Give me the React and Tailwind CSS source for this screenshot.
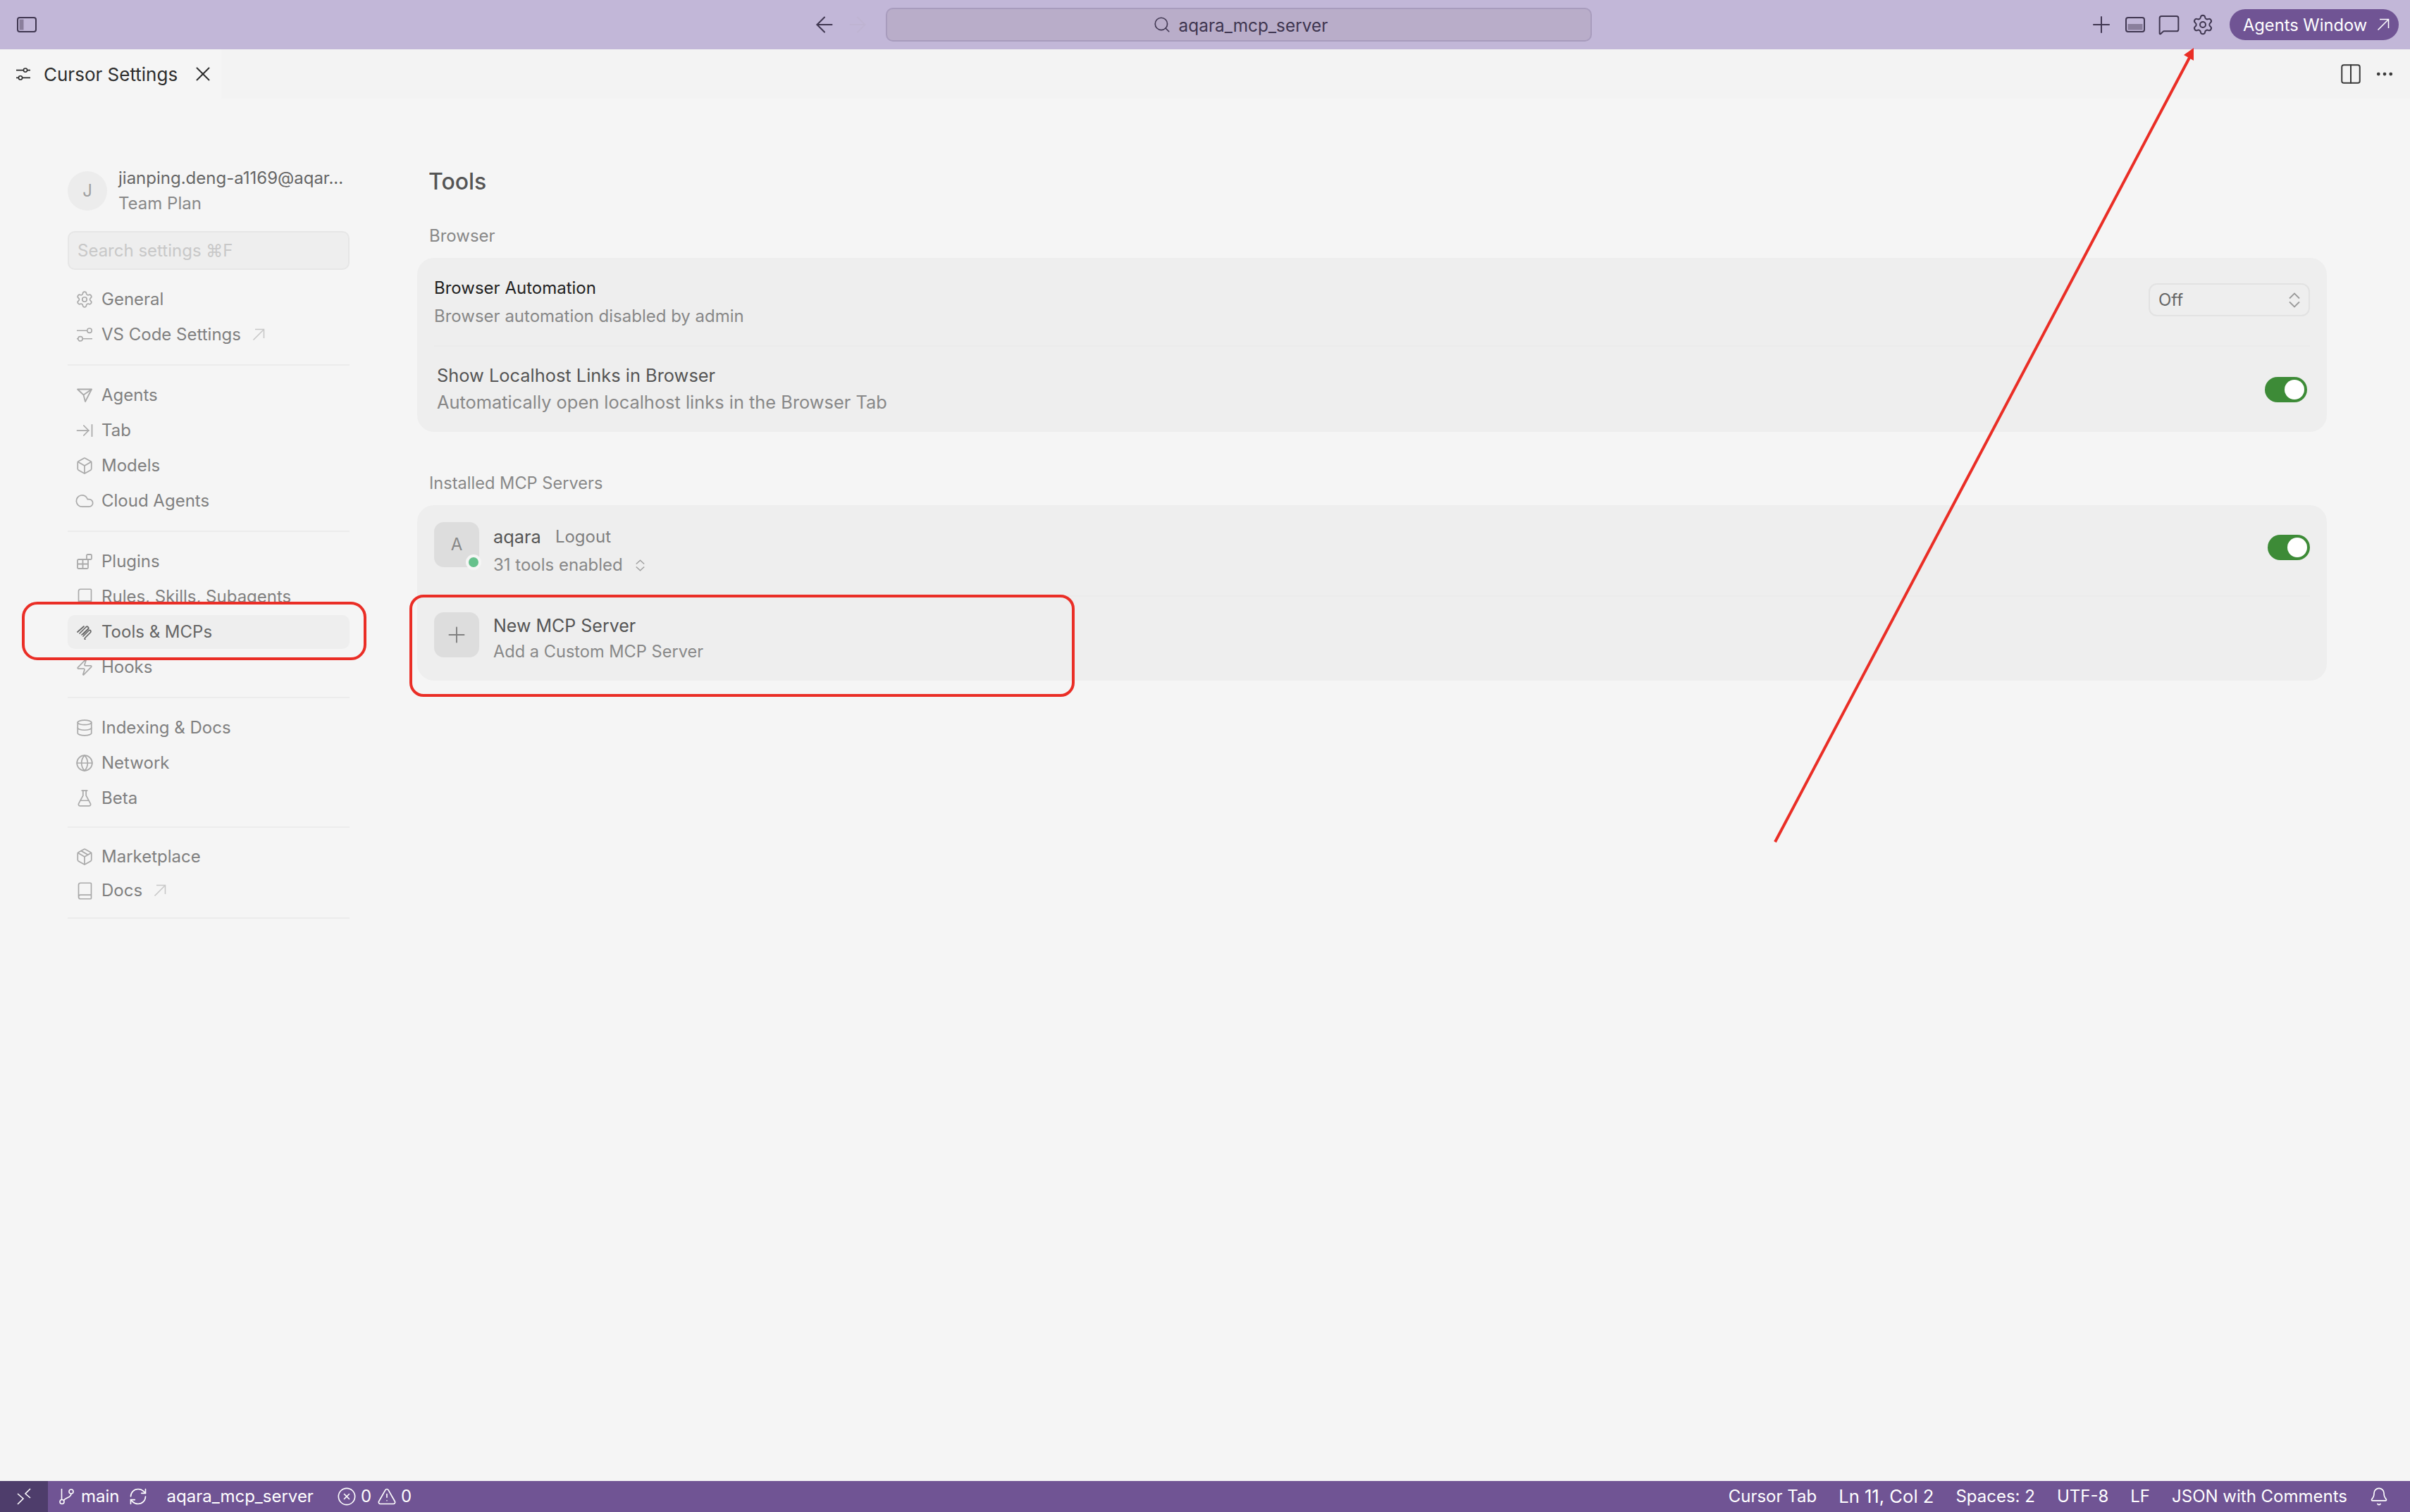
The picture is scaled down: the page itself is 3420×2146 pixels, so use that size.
import React from "react";
import {
  ArrowLeft,
  ArrowRight,
  ArrowRightToLine,
  Bell,
  Book,
  Box,
  CircleX,
  Cloud,
  Columns2,
  Database,
  Ellipsis,
  FlaskConical,
  Globe,
  MessageSquare,
  Package,
  Plus,
  RefreshCw,
  Search,
  Settings,
  TriangleAlert,
  X,
  Zap,
} from "lucide-react";

const PanelIcon = ({ side }) => (
  <svg width="28" height="22" viewBox="0 0 28 22" fill="none">
    <rect x="1" y="1" width="26" height="20" rx="3" stroke="#3f3650" strokeWidth="2" />
    {side === "left" ? (
      <rect x="3.5" y="3.5" width="6" height="15" fill="#8a7f9c" />
    ) : (
      <rect x="3.5" y="10" width="21" height="8.5" fill="#8a7f9c" />
    )}
  </svg>
);

const ExtArrow = ({ color, className }) => (
  <svg width="18" height="18" viewBox="0 0 18 18" fill="none" stroke={color} strokeWidth="1.6" className={className}>
    <path d="M1.5 16.5L16.5 1.5" />
    <path d="M4 1.5h12.5V14" />
  </svg>
);

const Sliders = ({ width, height, color, r, top, bottom }) => (
  <svg width={width} height={height} viewBox={`0 0 ${width} ${height}`} fill="none" stroke={color} strokeWidth="1.6">
    <path d={`M0 ${r + 1}H${top - r}M${top + r} ${r + 1}H${width}`} />
    <circle cx={top} cy={r + 1} r={r} />
    <path d={`M0 ${height - r - 1}H${bottom - r}M${bottom + r} ${height - r - 1}H${width}`} />
    <circle cx={bottom} cy={height - r - 1} r={r} />
  </svg>
);

const UpDown = ({ width, height, color }) => (
  <svg width={width} height={height} viewBox="0 0 16 22" fill="none" stroke={color} strokeWidth="1.8" preserveAspectRatio="none">
    <path d="M1 8.5L8 1.5l7 7" />
    <path d="M1 13.5l7 7 7-7" />
  </svg>
);

const AgentsIcon = () => (
  <svg width="22" height="22" viewBox="0 0 22 22" fill="none" stroke="#aaaaaa" strokeWidth="1.8" strokeLinejoin="round">
    <path d="M1 2.5h20L12 20l-2.5-9.5L1 2.5z" />
    <path d="M9.5 10.5L21 2.5" />
  </svg>
);

const PluginsIcon = () => (
  <svg width="22" height="22" viewBox="0 0 22 22" fill="none" stroke="#aaaaaa" strokeWidth="1.8">
    <rect x="1" y="8" width="15" height="13" rx="1.5" />
    <path d="M8.5 8v13M1 14.5h15" />
    <rect x="14" y="1" width="7" height="7" rx="1.5" />
  </svg>
);

const ToolsIcon = () => (
  <svg width="22" height="22" viewBox="0 0 22 22" fill="none" stroke="#666666" strokeWidth="1.7" strokeLinecap="round">
    <path d="M1 11l9-8" />
    <path d="M4 13l9-9c2-2 5 1 3 3l-7 7" />
    <path d="M7 15l9-8.5" />
    <path d="M9 17l8-8c2-2 4 1 2 3l-7 7c-1 1-1 2 0 3" />
  </svg>
);

const BranchIcon = () => (
  <svg width="24" height="24" viewBox="0 0 24 24" fill="none" stroke="#ffffff" strokeWidth="1.6">
    <circle cx="6" cy="19.5" r="3" />
    <circle cx="19" cy="5" r="3" />
    <path d="M5.5 1v15.5" />
    <path d="M19 8c0 6-8 5-10.5 9.5" />
  </svg>
);

const Rows = [
  [
    { label: "General", icon: <Settings size={26} strokeWidth={1.6} color="#aaaaaa" /> },
    { label: "VS Code Settings", icon: <Sliders width={22} height={20} r={3.2} top={18} bottom={5} color="#aaaaaa" />, external: true },
  ],
  [
    { label: "Agents", icon: <AgentsIcon /> },
    { label: "Tab", icon: <ArrowRightToLine size={28} strokeWidth={1.5} color="#aaaaaa" /> },
    { label: "Models", icon: <Box size={26} strokeWidth={1.6} color="#aaaaaa" /> },
    { label: "Cloud Agents", icon: <Cloud size={28} strokeWidth={1.5} color="#aaaaaa" /> },
  ],
  [
    { label: "Plugins", icon: <PluginsIcon /> },
    { label: "Rules, Skills, Subagents", icon: <Book size={27} strokeWidth={1.5} color="#aaaaaa" /> },
    { label: "Tools & MCPs", icon: <ToolsIcon />, active: true },
    { label: "Hooks", icon: <Zap size={26} strokeWidth={1.6} color="#aaaaaa" /> },
  ],
  [
    { label: "Indexing & Docs", icon: <Database size={26} strokeWidth={1.6} color="#aaaaaa" /> },
    { label: "Network", icon: <Globe size={26} strokeWidth={1.6} color="#aaaaaa" /> },
    { label: "Beta", icon: <FlaskConical size={26} strokeWidth={1.6} color="#aaaaaa" /> },
  ],
  [
    { label: "Marketplace", icon: <Package size={26} strokeWidth={1.6} color="#aaaaaa" />, compact: true },
    { label: "Docs", icon: <Book size={27} strokeWidth={1.5} color="#aaaaaa" />, external: true, compact: true },
  ],
];

function SideRow({ item }) {
  const inner = (
    <>
      <span className="w-[30px] h-[30px] flex items-center justify-center shrink-0">{item.icon}</span>
      <span className="ml-[9px] whitespace-nowrap">{item.label}</span>
      {item.external && <ExtArrow color="#c8c8c8" className="ml-[16px]" />}
    </>
  );

  if (item.active) {
    return (
      <div className="relative h-[50px] py-px">
        {/* red marker from the screenshot, hides the rows around it */}
        <div className="absolute left-[-65px] right-[-24px] top-[-18px] bottom-[-15px] bg-[#f5f5f5] border-[4px] border-[#ea2e26] rounded-[22px]" />
        <div className="relative h-[48px] flex items-center pl-[9px] rounded-[10px] bg-[#eeeeee] text-[#666666]">
          {inner}
        </div>
      </div>
    );
  }
  return <div className={`${item.compact ? "h-[48px]" : "h-[50px]"} flex items-center pl-[9px] text-[#808080]`}>{inner}</div>;
}

function Toggle({ className }) {
  return (
    <div className={`w-[60px] h-[36px] rounded-full bg-[#3d8b37] flex items-center justify-end pr-[4px] shrink-0 ${className}`}>
      <div className="w-[28px] h-[28px] rounded-full bg-white" />
    </div>
  );
}

export default function App() {
  return (
    <div className="relative w-[3420px] h-[2146px] flex flex-col overflow-hidden bg-[#f5f5f5] font-['Inter',sans-serif] text-[24px] leading-[32px]">
      {/* Title bar */}
      <div className="h-[70px] shrink-0 bg-[#c2b7d8] flex items-center">
        <div className="ml-[24px]"><PanelIcon side="left" /></div>
        <div className="ml-[1100px] flex items-center">
          <ArrowLeft size={36} strokeWidth={1.4} color="#3f3650" />
          <ArrowRight size={36} strokeWidth={1.4} color="#bfb4d2" className="ml-[11px]" />
        </div>
        <div className="ml-[22px] w-[1002px] h-[48px] rounded-[10px] bg-[#b9adc9] border-2 border-[#a89cbd] flex items-center justify-center text-[#3f3650] pl-[4px]">
          <Search size={26} strokeWidth={1.5} color="#3f3650" />
          <span className="ml-[11px] mt-[1px] text-[24.4px]">aqara_mcp_server</span>
        </div>
        <div className="ml-[699px] flex items-center">
          <div className="w-[48px] flex justify-center"><Plus size={38} strokeWidth={1.25} color="#3f3650" /></div>
          <div className="w-[48px] flex justify-center"><PanelIcon side="bottom" /></div>
          <div className="w-[48px] flex justify-center"><MessageSquare size={32} strokeWidth={1.5} color="#3f3650" /></div>
          <div className="w-[48px] flex justify-center"><Settings size={32} strokeWidth={1.5} color="#3f3650" /></div>
        </div>
        <div className="ml-[14px] w-[240px] h-[44px] rounded-full bg-[#705494] text-white flex items-center pl-[19px]">
          <span className="mt-[1px] text-[23.7px]">Agents Window</span>
          <ExtArrow color="#ffffff" className="ml-[14px]" />
        </div>
      </div>

      {/* Tab bar */}
      <div className="h-[70px] shrink-0 bg-[#f3f3f3] flex items-center">
        <div className="w-[314px] h-[70px] bg-[#f5f5f5] flex items-center pl-[23px] text-[#2d2d2d]">
          <Sliders width={20} height={18} r={2.6} top={13} bottom={6} color="#2d2d2d" />
          <span className="ml-[19px] text-[26px] mt-[1px] whitespace-nowrap">Cursor Settings</span>
          <X size={34} strokeWidth={1.4} color="#2d2d2d" className="ml-[19px]" />
        </div>
        <Columns2 size={34} strokeWidth={1.4} color="#3a3a3a" className="ml-[3005px]" />
        <Ellipsis size={30} strokeWidth={1.8} color="#3a3a3a" className="ml-[16px]" />
      </div>

      <div className="flex-1 flex">
        {/* Sidebar */}
        <div className="w-[400px] ml-[96px] pt-[95px] shrink-0">
          <div className="flex items-center">
            <div className="w-[56px] h-[56px] rounded-full bg-[#ececec] text-[#a0a0a0] flex items-center justify-center">J</div>
            <div className="ml-[16px]">
              <div className="text-[#666666] leading-[36px] whitespace-nowrap">jianping.deng-a1169@aqar...</div>
              <div className="text-[#888888] leading-[36px]">Team Plan</div>
            </div>
          </div>
          <div className="mt-[21px] h-[55px] rounded-[10px] bg-[#eeeeee] border-2 border-[#e6e6e6] flex items-center pl-[12px] text-[#c8c8c8]">
            Search settings ⌘F
          </div>
          <div className="mt-[17px]">
            {Rows.map((group, i) => (
              <div key={i}>
                {group.map((item) => <SideRow key={item.label} item={item} />)}
                {i === 3 ? (
                  <div className="mt-[15px] mb-[17px] h-[2px] bg-[#ececec]" />
                ) : i === 4 ? (
                  <div className="mt-[14px] h-[2px] bg-[#ececec]" />
                ) : (
                  <div className="mt-[17px] mb-[17px] h-[2px] bg-[#ececec]" />
                )}
              </div>
            ))}
          </div>
        </div>

        {/* Main */}
        <div className="w-[2710px] ml-[96px] pt-[98px] shrink-0">
          <div className="ml-[16px] h-[40px] text-[32px] leading-[40px] font-medium text-[#555555]">Tools</div>

          <div className="ml-[17px] mt-[42px] h-[30px] leading-[30px] text-[#888888]">Browser</div>
          <div className="mt-[16px] rounded-[24px] bg-[#eeeeee]">
            <div className="mx-[24px] h-[126px] flex items-start justify-between pt-[25px] border-b-2 border-[#ebebeb]">
              <div>
                <div className="h-[36px] leading-[36px] text-[#222222]">Browser Automation</div>
                <div className="mt-[4px] h-[36px] leading-[36px] text-[#888888]">Browser automation disabled by admin</div>
              </div>
              <div className="w-[229px] h-[47px] mt-[11px] rounded-[12px] border-2 border-[#e2e2e2] flex items-center justify-between pl-[12px] pr-[12px] text-[#666666]">
                <span>Off</span>
                <UpDown width={16} height={22} color="#9a9a9a" />
              </div>
            </div>
            <div className="ml-[28px] mr-[28px] h-[121px] flex items-center justify-between">
              <div className="-mt-[1px] text-[25.4px]">
                <div className="h-[36px] leading-[36px] text-[#555555]">Show Localhost Links in Browser</div>
                <div className="mt-[2px] h-[36px] leading-[36px] text-[#888888]">Automatically open localhost links in the Browser Tab</div>
              </div>
              <Toggle />
            </div>
          </div>

          <div className="ml-[17px] mt-[58px] h-[30px] leading-[30px] text-[23.6px] text-[#888888]">Installed MCP Servers</div>
          <div className="mt-[16px] rounded-[24px] bg-[#eeeeee]">
            <div className="mx-[24px] h-[130px] flex items-start justify-between pt-[24px] border-b-2 border-[#ebebeb]">
              <div className="flex items-start">
                <div className="relative w-[64px] h-[64px] rounded-[14px] bg-[#dddddd] text-[#888888] flex items-center justify-center">
                  A
                  <div className="absolute left-[45px] top-[46px] w-[22px] h-[22px] rounded-full bg-[#66c18c] border-[4px] border-[#f5f5f5]" />
                </div>
                <div className="ml-[20px] pt-[2px]">
                  <div className="flex h-[40px] items-center -mt-[1px]">
                    <span className="text-[25.4px] text-[#555555]">aqara</span>
                    <span className="ml-[20px] text-[#808080]">Logout</span>
                  </div>
                  <div className="flex h-[40px] items-center text-[#888888]">
                    <span>31 tools enabled</span>
                    <span className="ml-[18px]"><UpDown width={13} height={17} color="#a0a0a0" /></span>
                  </div>
                </div>
              </div>
              <Toggle className="mt-[18px]" />
            </div>
            <div className="relative h-[119px] px-[24px] pt-[22px] flex items-start">
              <div className="absolute left-[-11px] top-[-3px] w-[944px] h-[145px] border-[4px] border-[#ea2e26] rounded-[20px]" />
              <div className="w-[64px] h-[64px] rounded-[14px] bg-[#dddddd] flex items-center justify-center">
                <Plus size={36} strokeWidth={1.3} color="#808080" />
              </div>
              <div className="ml-[20px]">
                <div className="h-[38px] leading-[38px] text-[25px] text-[#555555]">New MCP Server</div>
                <div className="h-[36px] leading-[36px] text-[23.6px] text-[#888888]">Add a Custom MCP Server</div>
              </div>
            </div>
          </div>
        </div>
      </div>

      {/* Status bar */}
      <div className="h-[44px] shrink-0 bg-[#705494] flex items-center text-white">
        <div className="w-[68px] h-[44px] bg-[#4e3d6b] flex items-center justify-center">
          <svg width="20" height="24" viewBox="0 0 20 24" fill="none" stroke="#ffffff" strokeWidth="1.6">
            <path d="M1 8l8 7-8 8" />
            <path d="M19 1l-7 7 7 6" />
          </svg>
        </div>
        <span className="ml-[14px]"><BranchIcon /></span>
        <span className="ml-[9px]">main</span>
        <RefreshCw size={28} strokeWidth={1.4} color="#ffffff" className="ml-[12px]" />
        <span className="ml-[27px]">aqara_mcp_server</span>
        <CircleX size={28} strokeWidth={1.4} color="#ffffff" className="ml-[33px]" />
        <span className="ml-[6px]">0</span>
        <TriangleAlert size={28} strokeWidth={1.4} color="#ffffff" className="ml-[8px]" />
        <span className="ml-[6px]">0</span>
        <div className="ml-auto flex items-center gap-[31px] pr-[30px]">
          <span>Cursor Tab</span>
          <span className="text-[25.6px]">Ln 11, Col 2</span>
          <span>Spaces: 2</span>
          <span>UTF-8</span>
          <span>LF</span>
          <span>JSON with Comments</span>
          <Bell size={28} strokeWidth={1.4} color="#ffffff" />
        </div>
      </div>

      {/* Red arrow drawn over the screenshot */}
      <svg className="absolute left-0 top-0 pointer-events-none" width="3420" height="2146" fill="none">
        <path d="M2519 1195L3108 80" stroke="#ea2e26" strokeWidth="4" />
        <path d="M3113 68L3099 78L3113 86z" fill="#ea2e26" />
      </svg>
    </div>
  );
}
